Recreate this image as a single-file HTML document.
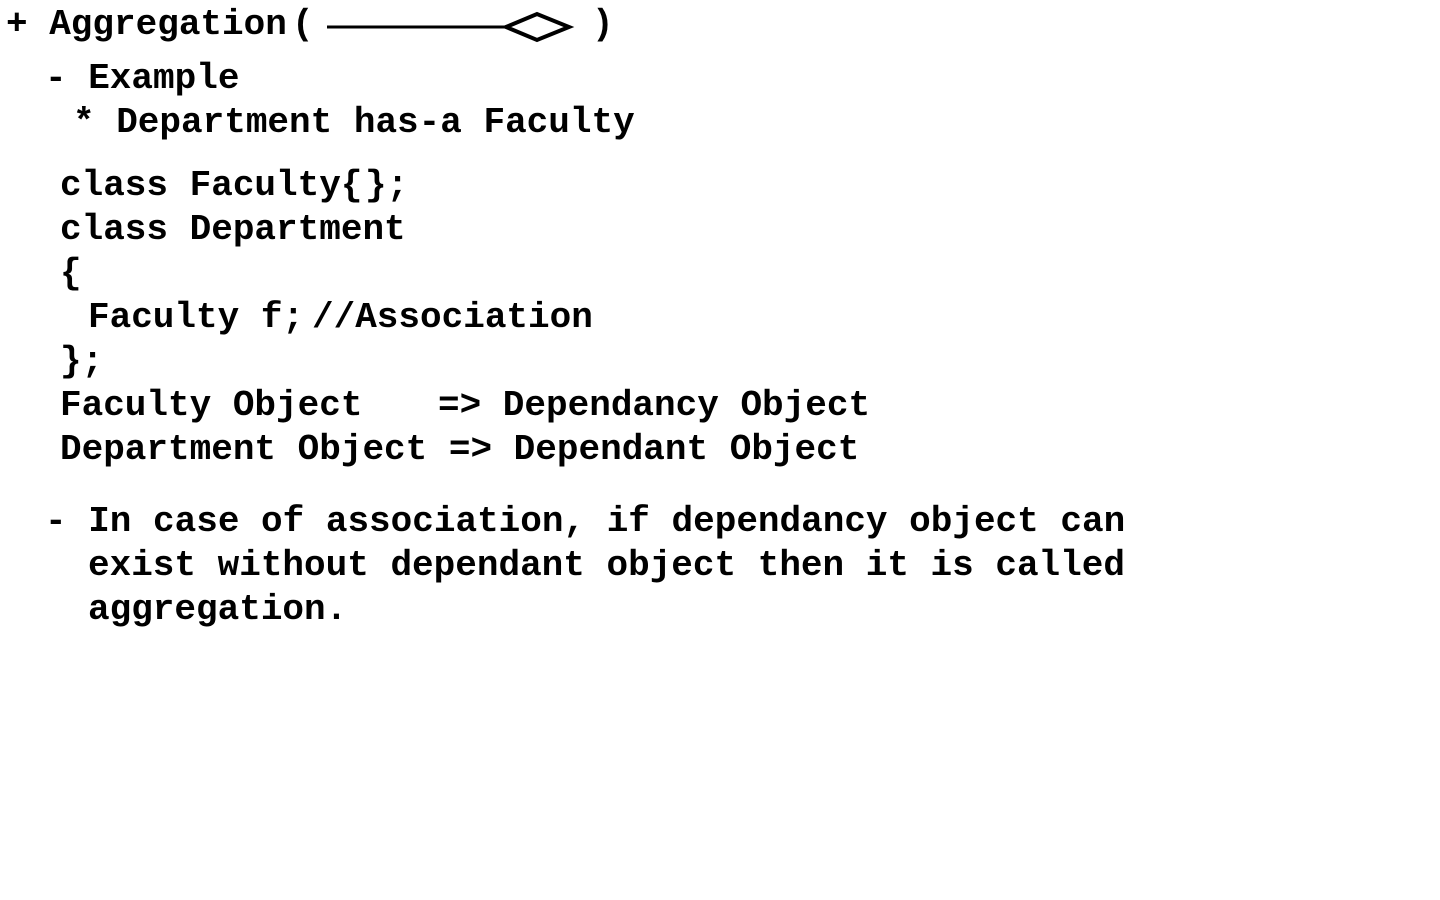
<!DOCTYPE html>
<html><head><meta charset="utf-8"><style>
html,body{margin:0;padding:0;background:#fff;width:1440px;height:900px;overflow:hidden}
.t{position:absolute;font-family:"Liberation Mono",monospace;font-weight:bold;font-size:36px;line-height:36px;color:#000;white-space:pre;letter-spacing:0}
</style></head><body>
<div class="t" style="left:6px;top:7px">+ Aggregation</div>
<div class="t" style="left:292px;top:7px">(</div>
<div class="t" style="left:592px;top:7px">)</div>
<svg style="position:absolute;left:0;top:0" width="640" height="60"><line x1="327" y1="27" x2="506" y2="27" stroke="#000" stroke-width="3"/><polygon points="506,27 537,14 569,27 537,40" fill="none" stroke="#000" stroke-width="4"/></svg>
<div class="t" style="left:45px;top:61px">- Example</div>
<div class="t" style="left:73px;top:105px">* Department has-a Faculty</div>
<div class="t" style="left:60px;top:168px">class Faculty{</div>
<div class="t" style="left:365px;top:168px">};</div>
<div class="t" style="left:60px;top:212px">class Department</div>
<div class="t" style="left:60px;top:256px">{</div>
<div class="t" style="left:88px;top:300px">Faculty f;</div>
<div class="t" style="left:312px;top:300px">//Association</div>
<div class="t" style="left:60px;top:344px">};</div>
<div class="t" style="left:60px;top:388px">Faculty Object</div>
<div class="t" style="left:438px;top:388px">=> Dependancy Object</div>
<div class="t" style="left:60px;top:432px">Department Object => Dependant Object</div>
<div class="t" style="left:45px;top:504px">- In case of association, if dependancy object can</div>
<div class="t" style="left:88px;top:548px">exist without dependant object then it is called</div>
<div class="t" style="left:88px;top:592px">aggregation.</div>
</body></html>
